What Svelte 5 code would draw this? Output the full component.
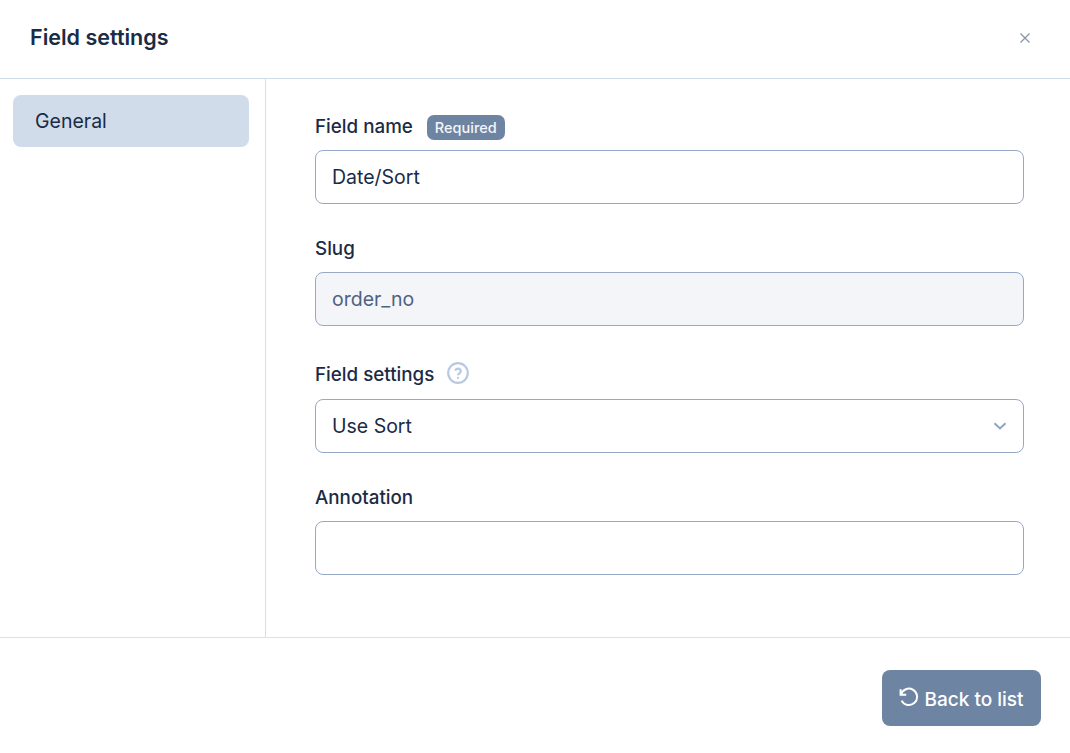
<script>
  let fieldName = "Date/Sort";
  let annotation = "";
</script>

<div class="dialog">
  <header class="head">
    <h2>Field settings</h2>
    <button class="close" aria-label="Close">
      <svg width="12" height="12" viewBox="0 0 12 12"><path d="M1.5 1.5l9 9M10.5 1.5l-9 9" /></svg>
    </button>
  </header>

  <div class="body">
    <nav class="side">
      <div class="tab">General</div>
    </nav>
    <main class="form">
      <div class="field">
        <div class="label">
          <span>Field name</span>
          <span class="badge">Required</span>
        </div>
        <input class="input" type="text" bind:value={fieldName} />
      </div>

      <div class="field">
        <div class="label"><span>Slug</span></div>
        <input class="input" type="text" value="order_no" disabled />
      </div>

      <div class="field">
        <div class="label tall">
          <span>Field settings</span>
          <svg class="help" width="22" height="22" viewBox="0 0 22 22">
            <circle cx="11" cy="11" r="9.8" />
            <path d="M8.2 8.6a2.9 2.9 0 0 1 5.6 .6c0 1.9-2.8 2.2-2.8 4" />
            <circle class="dot" cx="11" cy="15.9" r="1.1" />
          </svg>
        </div>
        <div class="select input">
          <span>Use Sort</span>
          <svg width="14" height="8" viewBox="0 0 14 8"><path d="M1.5 1.2L7 6.4l5.5-5.2" /></svg>
        </div>
      </div>

      <div class="field">
        <div class="label"><span>Annotation</span></div>
        <input class="input" type="text" bind:value={annotation} />
      </div>
    </main>
  </div>

  <footer class="foot">
    <button class="back">
      <svg width="20" height="20" viewBox="0 0 20 20">
        <path d="M1.6 2.2v5.6h5.6" />
        <path d="M2 7.6A8.2 8.2 0 1 1 2.6 13.6" />
      </svg>
      <span>Back to list</span>
    </button>
  </footer>
</div>

<style>
  :global(body) {
    margin: 0;
    background: #fff;
  }

  .dialog {
    height: 753px;
    display: flex;
    flex-direction: column;
    font-family: "Inter", "Noto Sans", sans-serif;
    color: #1a2b45;
  }

  .head {
    box-sizing: content-box;
    height: 74px;
    flex: none;
    display: flex;
    align-items: center;
    justify-content: space-between;
    padding: 0 39px 4px 30px;
    border-bottom: 1px solid #cfdde9;
  }

  h2 {
    margin: 0;
    font-size: 21.5px;
    font-weight: 600;
  }

  .close {
    display: flex;
    padding: 0;
    margin-top: 2px;
    border: none;
    background: none;
  }

  .close path {
    fill: none;
    stroke: #8794a8;
    stroke-width: 1.2;
  }

  .body {
    flex: 1;
    display: flex;
    min-height: 0;
  }

  .side {
    width: 265px;
    flex: none;
    border-right: 1px solid #d5dfe9;
  }

  .tab {
    margin: 16px 16px 0 13px;
    height: 52px;
    line-height: 52px;
    padding-left: 22px;
    border-radius: 8px;
    background: #d0dcea;
    font-size: 19.5px;
  }

  .form {
    flex: 1;
    padding: 33px 46px 0 49px;
    display: flex;
    flex-direction: column;
    gap: 30px;
  }

  .field {
    display: flex;
    flex-direction: column;
  }

  .label {
    height: 30px;
    margin-bottom: 8px;
    display: flex;
    align-items: center;
    gap: 14px;
    font-size: 18.8px;
    font-weight: 500;
  }

  .label > span:first-child {
    margin-top: -2px;
  }

  .label.tall {
    height: 35px;
    padding-top: 3px;
    box-sizing: border-box;
  }

  .badge {
    height: 25px;
    line-height: 25px;
    margin-top: 1px;
    padding: 0 8px;
    border-radius: 7px;
    background: #6e84a3;
    color: #f4f6f9;
    font-size: 14.5px;
    font-weight: 500;
  }

  .help {
    margin-left: -1px;
    margin-top: -5px;
  }

  .help circle,
  .help path {
    fill: none;
    stroke: #b9c9df;
    stroke-width: 2.2;
  }

  .help .dot {
    fill: #b9c9df;
    stroke: none;
  }

  .input {
    box-sizing: border-box;
    width: 100%;
    height: 54px;
    padding: 0 16px;
    border: 1px solid #97a9c6;
    border-radius: 8px;
    background: #fff;
    color: #1a2b45;
    font: inherit;
    font-size: 19.5px;
    outline: none;
  }

  .input:disabled {
    background: #f3f5f9;
    color: #4f6282;
    opacity: 1;
  }

  .select {
    display: flex;
    align-items: center;
    justify-content: space-between;
  }

  .select path {
    fill: none;
    stroke: #8ba2c4;
    stroke-width: 1.9;
  }

  .foot {
    height: 116px;
    flex: none;
    box-sizing: border-box;
    border-top: 1px solid #dbe1e8;
    display: flex;
    justify-content: flex-end;
    align-items: flex-start;
    padding: 32px 29px 0 0;
  }

  .back {
    width: 159px;
    height: 56px;
    display: flex;
    align-items: center;
    justify-content: center;
    gap: 5px;
    border: none;
    border-radius: 8px;
    background: #6e84a3;
    color: #fff;
    font: inherit;
    font-size: 19px;
    font-weight: 500;
  }

  .back span {
    margin-top: 2px;
  }

  .back svg {
    margin-top: -2px;
  }

  .back path {
    fill: none;
    stroke: #fff;
    stroke-width: 2;
  }
</style>
